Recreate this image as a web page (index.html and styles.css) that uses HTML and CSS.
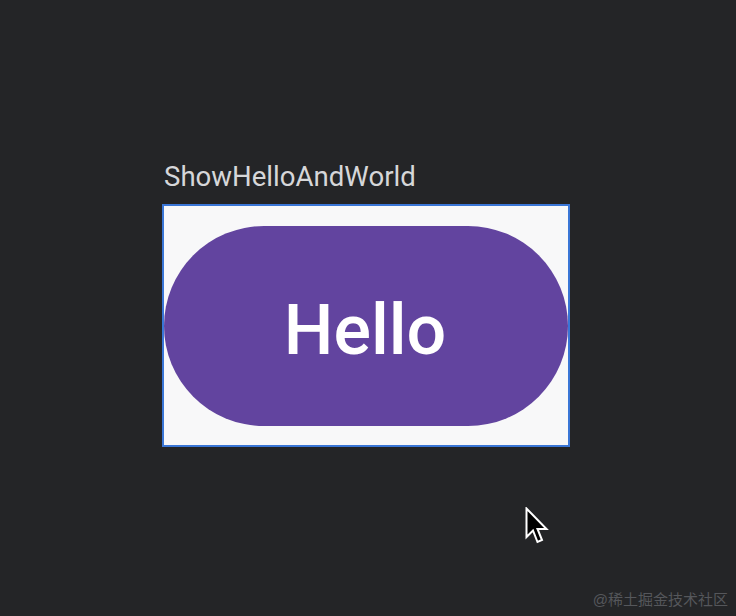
FILE: index.html
```html
<!DOCTYPE html>
<html>
<head>
<meta charset="utf-8">
<link rel="stylesheet" href="styles.css">
</head>
<body>
<div class="canvas">
  <div class="preview">
    <div class="label">ShowHelloAndWorld</div>
    <div class="frame">
      <div class="pill"><span class="pill-text">Hello</span></div>
    </div>
  </div>
  <svg class="cursor" width="24" height="38" viewBox="0 0 24 38">
    <path d="M1.5 1.5 L1.5 30 L8 23.5 L12.5 35 L17 33 L12.5 22 L21.5 22 Z" fill="#000" stroke="#fff" stroke-width="2" stroke-linejoin="miter"/>
  </svg>
  <div class="watermark">@稀土掘金技术社区</div>
</div>
</body>
</html>
```
FILE: styles.css
```css
html, body {
  margin: 0;
  padding: 0;
  background: #242527;
}
.canvas {
  position: relative;
  width: 736px;
  height: 616px;
  overflow: hidden;
  background: #242527;
}
.preview {
  display: flex;
  flex-direction: column;
  align-items: flex-start;
  padding-top: 161px;
  padding-left: 162px;
}
.label {
  font-family: Roboto, "Noto Sans", sans-serif;
  font-size: 27.6px;
  line-height: 32px;
  color: #d6d7d9;
  padding-left: 2px;
  margin-bottom: 11px;
}
.frame {
  box-sizing: border-box;
  width: 408px;
  height: 243px;
  border: 2px solid #3a76d6;
  background: #f8f8f9;
  padding-top: 20px;
}
.pill {
  width: 404px;
  height: 200px;
  border-radius: 100px;
  background: #62449f;
  display: flex;
  align-items: center;
  justify-content: center;
}
.pill-text {
  font-family: Roboto, "Noto Sans", sans-serif;
  font-weight: 500;
  font-size: 70px;
  color: #ffffff;
  padding-top: 7px;
  margin-right: 2px;
}
.cursor {
  position: absolute;
  left: 525px;
  top: 507px;
}
.watermark {
  position: absolute;
  right: 8px;
  bottom: 6px;
  font-family: "Liberation Sans", "Noto Sans CJK SC", sans-serif;
  font-size: 15px;
  line-height: 20px;
  color: #55575b;
}
```
